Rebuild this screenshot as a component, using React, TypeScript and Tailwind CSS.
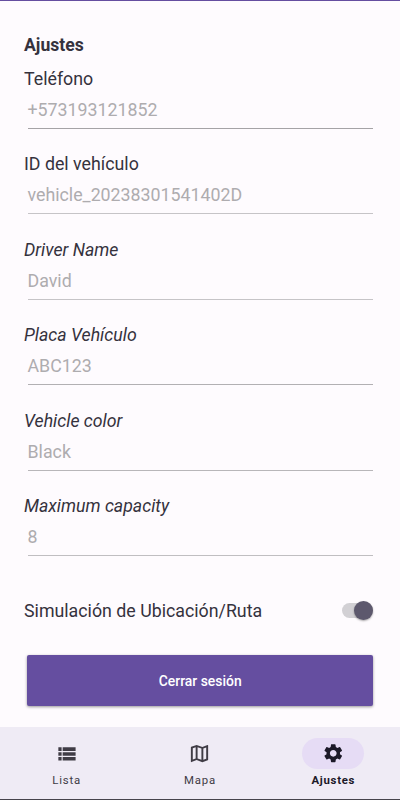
import { useState } from "react";
import { MdOutlineMap, MdSettings } from "react-icons/md";

const fields = [
  { label: "Teléfono", value: "+573193121852", line: "border-[#a5a3a6]" },
  { label: "ID del vehículo", value: "vehicle_20238301541402D", line: "border-[#c6c4c7]" },
  { label: "Driver Name", value: "David", italic: true, line: "border-[#c6c4c7]" },
  { label: "Placa Vehículo", value: "ABC123", italic: true, line: "border-[#b2b0b3]" },
  { label: "Vehicle color", value: "Black", italic: true, line: "border-[#b8b6b9]" },
  { label: "Maximum capacity", value: "8", italic: true, line: "border-[#c0bec1]" },
];

function ListIcon() {
  return (
    <svg viewBox="0 0 24 24" className="h-[23px] w-[23px]" fill="currentColor">
      <path d="M3.5 5.6h3.4v3.8H3.5zM8 5.6h13.5v3.8H8zM3.5 10.6h3.4v3.8H3.5zM8 10.6h13.5v3.8H8zM3.5 15.6h3.4v3.8H3.5zM8 15.6h13.5v3.8H8z" />
    </svg>
  );
}

const tabs = [
  { name: "Lista", icon: <ListIcon /> },
  { name: "Mapa", icon: <MdOutlineMap className="h-[23px] w-[23px]" /> },
  { name: "Ajustes", icon: <MdSettings className="h-[22.5px] w-[22.5px]" /> },
];

export default function App() {
  const [simulate, setSimulate] = useState(true);
  const [active, setActive] = useState("Ajustes");

  return (
    <main className="flex h-[800px] w-[400px] flex-col overflow-hidden border-t border-[#654ea0] bg-[#fefbfe] font-['Roboto',sans-serif] text-[#35323d]">
      <section className="flex-1 px-6 pt-8">
        <h1 className="h-[34px] text-[17.6px] leading-6 font-bold">Ajustes</h1>

        {fields.map((field) => (
          <div key={field.label} className="h-[85.4px] text-[17.8px] leading-6">
            <p className={field.italic ? "text-[17.7px] italic" : ""}>{field.label}</p>
            <div className={`mr-[3px] ml-[3.5px] h-[38px] border-b pt-[7px] text-[#aeacaf] ${field.line}`}>
              {field.value}
            </div>
          </div>
        ))}

        {/* Location simulation switch */}
        <div className="flex h-[63px] items-center justify-between pr-[3px] text-[17.8px]">
          <span>Simulación de Ubicación/Ruta</span>
          <button
            role="switch"
            aria-checked={simulate}
            onClick={() => setSimulate(!simulate)}
            className={`flex h-[15px] w-[31px] items-center rounded-full bg-[#d2d0d4] ${simulate ? "justify-end" : ""}`}
          >
            <span className="h-[19px] w-[19px] rounded-full bg-[#5d586d] shadow-[0_1px_2px_rgba(0,0,0,0.35)]"></span>
          </button>
        </div>

        <div className="pr-[3px] pl-[3.4px] pt-[12.6px]">
          <button className="h-[51px] w-full rounded-[2px] bg-[#654ea0] pt-[2px] text-[13.9px] font-medium text-white shadow-[0_1px_3px_rgba(0,0,0,0.4)]">
            Cerrar sesión
          </button>
        </div>
      </section>

      {/* Bottom navigation */}
      <nav className="flex h-[73px] shrink-0 border-b border-[#46434b] bg-[#efebf5] pt-[11px]">
        {tabs.map((tab) => (
          <button
            key={tab.name}
            onClick={() => setActive(tab.name)}
            className={`flex flex-1 flex-col items-center text-[11.4px] ${
              active === tab.name
                ? "font-bold tracking-[0.7px] text-[#1c1928]"
                : "font-normal tracking-[0.8px] text-[#3f3c45]"
            }`}
          >
            <span
              className={`flex h-[31px] w-[62px] items-center justify-center rounded-full ${
                active === tab.name ? "bg-[#e6dcf5]" : ""
              }`}
            >
              {tab.icon}
            </span>
            <span className="mt-[3px] leading-4">{tab.name}</span>
          </button>
        ))}
      </nav>
    </main>
  );
}
